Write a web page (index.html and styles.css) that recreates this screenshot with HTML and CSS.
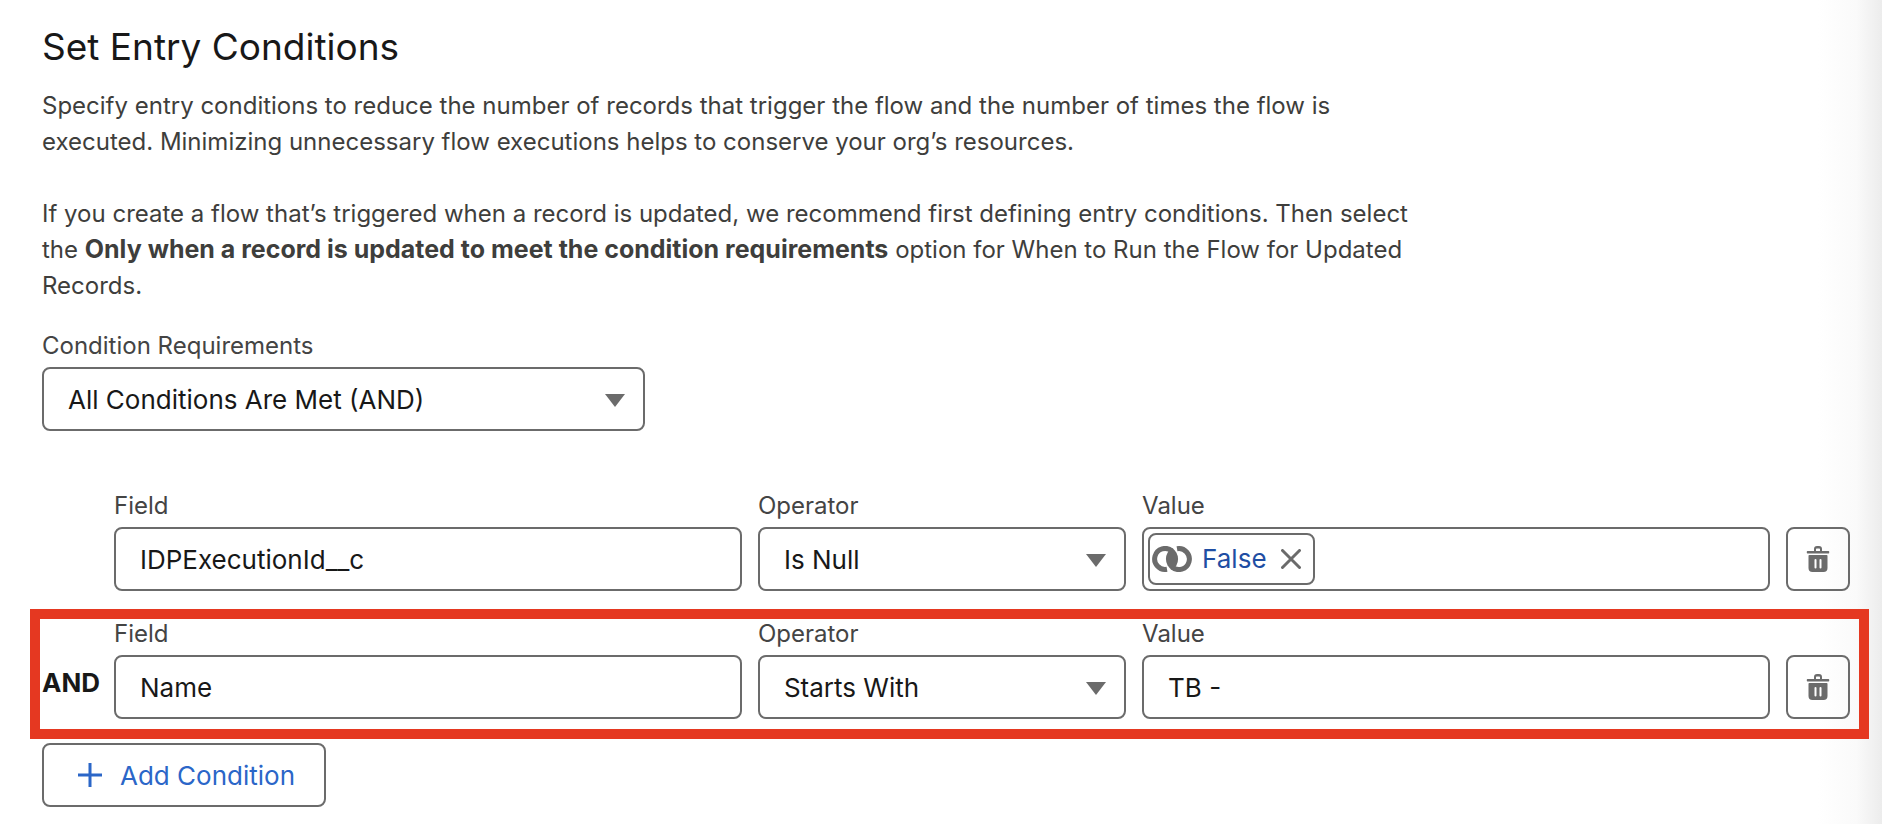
FILE: index.html
```
<!DOCTYPE html>
<html lang="en">
<head>
    <meta charset="UTF-8">
    <meta name="viewport" content="width=device-width, initial-scale=1.0">
    <title>Set Entry Conditions</title>
    <link rel="stylesheet" href="styles.css">
</head>
<body>
    <main class="panel">
        <h2>Set Entry Conditions</h2>

        <div class="description">
            <p>Specify entry conditions to reduce the number of records that trigger the flow and the number of times the flow is executed. Minimizing unnecessary flow executions helps to conserve your org’s resources.</p>
            <p>If you create a flow that’s triggered when a record is updated, we recommend first defining entry conditions. Then select the <strong>Only when a record is updated to meet the condition requirements</strong> option for When to Run the Flow for Updated Records.</p>
        </div>

        <div class="form-item requirements">
            <label for="logic">Condition Requirements</label>
            <div class="select">
                <select id="logic">
                    <option>All Conditions Are Met (AND)</option>
                    <option>Any Condition Is Met (OR)</option>
                </select>
            </div>
        </div>

        <div class="conditions">
            <div class="condition">
                <span class="logic"></span>
                <div class="form-item">
                    <label for="field1">Field</label>
                    <input class="box" type="text" id="field1" value="IDPExecutionId__c">
                </div>
                <div class="form-item">
                    <label for="operator1">Operator</label>
                    <div class="select">
                        <select id="operator1">
                            <option>Is Null</option>
                            <option>Starts With</option>
                        </select>
                    </div>
                </div>
                <div class="form-item">
                    <label for="value1">Value</label>
                    <div class="box value-box">
                        <span class="pill">
                            <svg class="icon-link" viewBox="0 0 40 26">
                                <path d="M15 23.300A10.500 10.500 0 1 1 20 5" fill="none" stroke="#6b6b6b" stroke-width="5"/>
                                <path d="M25 2.700A10.500 10.500 0 1 1 20 21" fill="none" stroke="#6b6b6b" stroke-width="5"/>
                                <path d="M20 2A13 13 0 0 1 20 24A13 13 0 0 1 20 2Z" fill="#6b6b6b"/>
                            </svg>
                            <a href="#">False</a>
                            <button type="button" class="pill-remove" aria-label="Remove">
                                <svg viewBox="0 0 20 20"><path d="M1.500 1.500l17 17M18.500 1.500l-17 17" stroke="#6b6b6b" stroke-width="3" stroke-linecap="round"/></svg>
                            </button>
                        </span>
                        <input type="text" id="value1">
                    </div>
                </div>
                <button type="button" class="btn-delete" aria-label="Delete condition">
                    <svg viewBox="0 0 24 26" fill="#6b6b6b">
                        <path d="M1.500 5H8V3q0-3 3-3h2q3 0 3 3v2h6.500q.7 0 .7.700v1q0 .8-.7.800h-21q-.7 0-.7-.8v-1q0-.7.700-.7zM10 5h4V3.200q0-.7-.7-.7h-2.600q-.7 0-.7.700z"/>
                        <path fill-rule="evenodd" d="M3.300 9h17.400q.8 0 .8.800V22q0 4-4 4h-11q-4 0-4-4V9.800q0-.8.800-.8zM9.500 13q-1 0-1 1v7.500q0 1 1 1t1-1V14q0-1-1-1zM14.500 13q-1 0-1 1v7.500q0 1 1 1t1-1V14q0-1-1-1z"/>
                    </svg>
                </button>
            </div>

            <div class="condition highlighted">
                <span class="logic">AND</span>
                <div class="form-item">
                    <label for="field2">Field</label>
                    <input class="box" type="text" id="field2" value="Name">
                </div>
                <div class="form-item">
                    <label for="operator2">Operator</label>
                    <div class="select">
                        <select id="operator2">
                            <option>Starts With</option>
                            <option>Is Null</option>
                        </select>
                    </div>
                </div>
                <div class="form-item">
                    <label for="value2">Value</label>
                    <input class="box" type="text" id="value2" value="TB -">
                </div>
                <button type="button" class="btn-delete" aria-label="Delete condition">
                    <svg viewBox="0 0 24 26" fill="#6b6b6b">
                        <path d="M1.500 5H8V3q0-3 3-3h2q3 0 3 3v2h6.500q.7 0 .7.700v1q0 .8-.7.800h-21q-.7 0-.7-.8v-1q0-.7.700-.7zM10 5h4V3.200q0-.7-.7-.7h-2.600q-.7 0-.7.700z"/>
                        <path fill-rule="evenodd" d="M3.300 9h17.400q.8 0 .8.800V22q0 4-4 4h-11q-4 0-4-4V9.800q0-.8.800-.8zM9.500 13q-1 0-1 1v7.500q0 1 1 1t1-1V14q0-1-1-1zM14.500 13q-1 0-1 1v7.500q0 1 1 1t1-1V14q0-1-1-1z"/>
                    </svg>
                </button>
            </div>
        </div>

        <button type="button" class="btn-add">
            <svg viewBox="0 0 24 24"><path d="M12 0v24M0 12h24" stroke="#2b66c8" stroke-width="3"/></svg>
            Add Condition
        </button>
    </main>
</body>
</html>
```
FILE: styles.css
```
* {
    box-sizing: border-box;
}

body {
    margin: 0;
    min-height: 100vh;
    background: #fff linear-gradient(to right, #fff, #fafafa 60%, #ececec) right / 64px 100% no-repeat;
    color: #181818;
    font-family: Inter, "Liberation Sans", sans-serif;
    font-size: 24px;
    line-height: 36px;
}

.panel {
    padding: 23px 32px 16px 42px;
}

h2 {
    margin: 0 0 17px;
    font-size: 37px;
    font-weight: 400;
    line-height: 48px;
}

.description {
    max-width: 1380px;
    margin-bottom: 24px;
    color: #3e3e3c;
}

p {
    margin: 0;
}

p + p {
    margin-top: 36px;
}

strong {
    font-size: 25px;
    line-height: 24px;
}

label {
    display: block;
    margin-bottom: 3px;
    color: #444;
}

input,
select,
button {
    color: inherit;
    font-family: inherit;
    font-size: 26px;
}

.box,
select,
.btn-delete,
.btn-add {
    height: 64px;
    border: 2px solid #6b6b6b;
    border-radius: 8px;
    background: transparent;
}

.box,
select {
    display: block;
    width: 100%;
    padding: 0 24px;
}

.requirements {
    width: 603px;
    max-width: 100%;
    margin-bottom: 57px;
}

.select {
    position: relative;
}

select {
    appearance: none;
}

/* dropdown arrow */
.select::after {
    content: "";
    position: absolute;
    top: 27px;
    right: 20px;
    border: 10px solid transparent;
    border-top: 13px solid #6b6b6b;
    border-bottom: 0;
    pointer-events: none;
}

.conditions {
    display: grid;
    gap: 25px;
    margin-bottom: 24px;
}

.condition {
    display: grid;
    grid-template-columns: 56px 29fr 17fr 29fr 64px;
    column-gap: 16px;
    align-items: end;
    position: relative;
}

.highlighted::before {
    content: "";
    position: absolute;
    inset: -7px -19px -20px -12px;
    border: 10px solid #e53821;
    pointer-events: none;
}

.logic {
    padding-bottom: 18px;
    font-size: 26px;
    font-weight: 700;
}

.value-box {
    display: flex;
    align-items: center;
    padding: 0 4px;
}

.value-box input {
    flex: 1;
    min-width: 0;
    border: 0;
    background: none;
}

.pill {
    display: flex;
    align-items: center;
    height: 52px;
    padding: 0 12px 0 2px;
    border: 2px solid #6b6b6b;
    border-radius: 8px;
    font-size: 26px;
}

.pill a {
    margin: 0 14px 0 10px;
    color: #1f4ea3;
    text-decoration: none;
}

.icon-link {
    width: 40px;
    height: 26px;
}

.pill-remove {
    display: flex;
    padding: 0;
    border: 0;
    background: none;
}

.pill-remove svg {
    width: 20px;
    height: 20px;
}

.btn-delete {
    display: flex;
    align-items: center;
    justify-content: center;
    padding: 0;
}

.btn-delete svg {
    width: 24px;
    height: 26px;
}

.btn-add {
    display: flex;
    align-items: center;
    gap: 18px;
    padding: 0 29px 0 34px;
    color: #2b66c8;
}

.btn-add svg {
    width: 24px;
    height: 24px;
}
```
